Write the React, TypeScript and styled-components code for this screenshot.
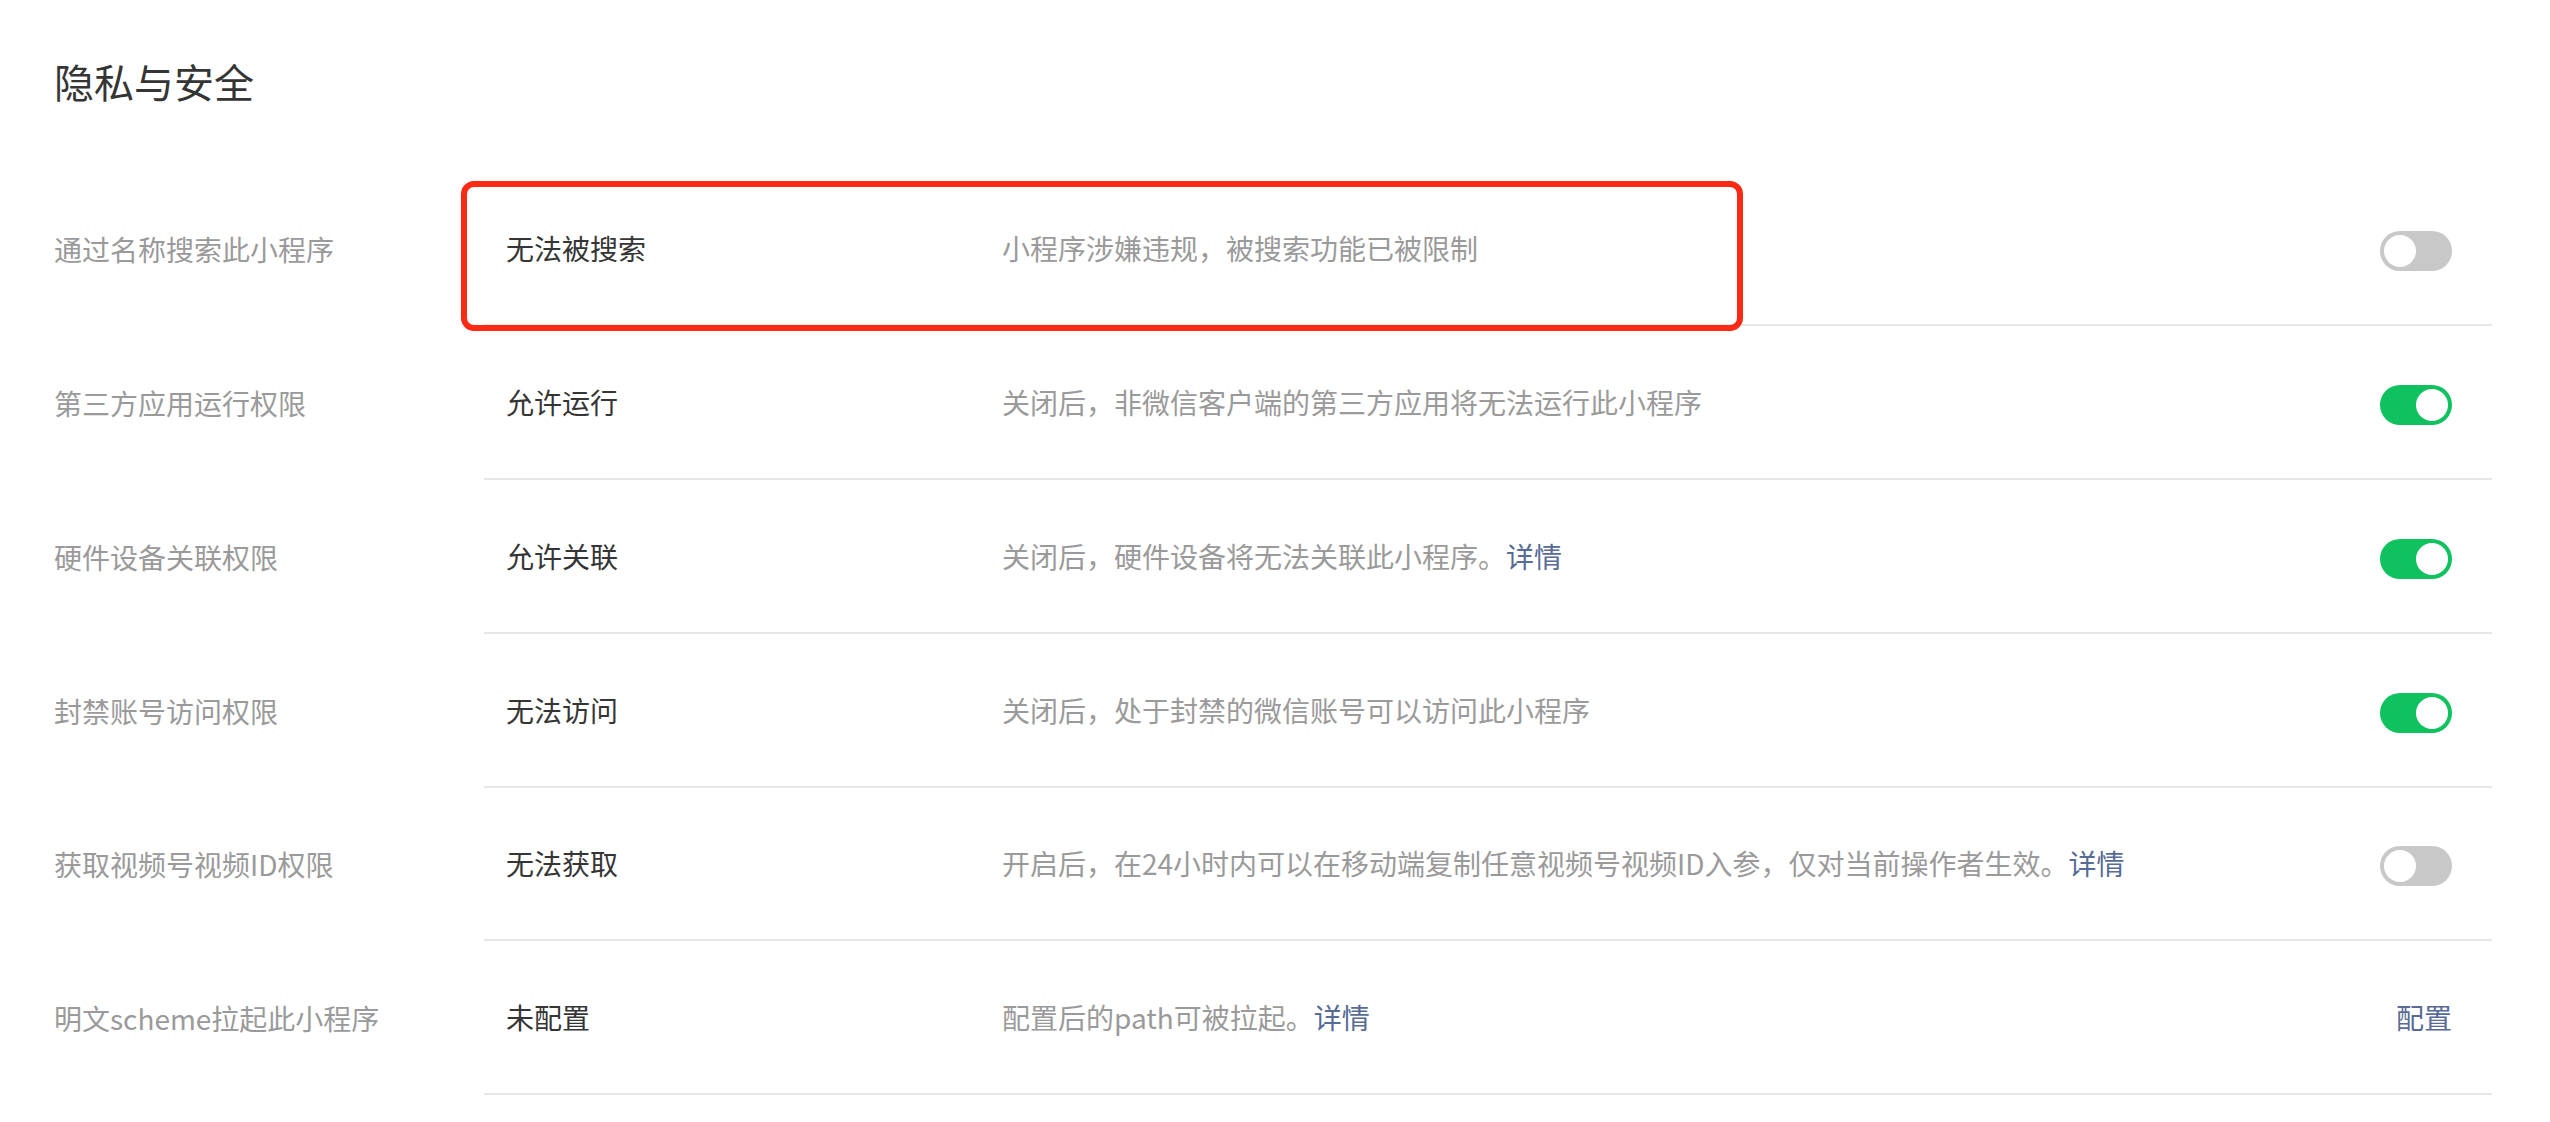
import React from "react";
import styled, { createGlobalStyle } from "styled-components";

const Global = createGlobalStyle`
  html, body { margin: 0; padding: 0; background: #ffffff; }
  body {
    font-family: "Noto Sans CJK SC", "Noto Sans", "Liberation Sans", sans-serif;
    -webkit-font-smoothing: antialiased;
  }
`;

const Page = styled.div`
  width: 2550px;
  height: 1122px;
  box-sizing: border-box;
  padding: 61px 58px 0 54px;
  overflow: hidden;
`;

const Title = styled.h2`
  margin: 0 0 71.5px;
  font-size: 40px;
  line-height: 40px;
  font-weight: 400;
  color: #353535;
`;

const List = styled.div`
  display: flex;
  flex-direction: column;
`;

const Row = styled.div`
  display: flex;
  height: 153.75px;
`;

const Label = styled.div`
  width: 430px;
  flex: none;
  display: flex;
  align-items: center;
  font-size: 28px;
  color: #9a9a9a;
`;

const Body = styled.div`
  position: relative;
  flex: 1;
  display: flex;
  align-items: center;
  box-sizing: border-box;
  padding: 0 40px 0 22px;
  border-bottom: 2px solid #e7e7eb;
`;

const Value = styled.div`
  width: 496px;
  flex: none;
  font-size: 28px;
  color: #353535;
`;

const Desc = styled.div`
  flex: 1;
  font-size: 28px;
  color: #9a9a9a;
`;

const Link = styled.a`
  color: #576b95;
  text-decoration: none;
  cursor: pointer;
`;

const ActionLink = styled(Link)`
  font-size: 28px;
`;

const Switch = styled.div<{ $on: boolean }>`
  position: relative;
  width: 72px;
  height: 40px;
  margin-top: 6px;
  border-radius: 20px;
  flex: none;
  background: ${(p) => (p.$on ? "#0fc15f" : "#c8c8c8")};

  &::after {
    content: "";
    position: absolute;
    top: 4px;
    left: ${(p) => (p.$on ? "36px" : "4px")};
    width: 32px;
    height: 32px;
    border-radius: 50%;
    background: #ffffff;
  }
`;

const Highlight = styled.div`
  position: absolute;
  left: -23px;
  top: 8.5px;
  width: 1282px;
  height: 150px;
  box-sizing: border-box;
  border: 6px solid #fa2a15;
  border-radius: 13px;
  pointer-events: none;
`;

type Item = {
  label: string;
  value: string;
  desc: string;
  detail?: boolean;
  toggle?: boolean;
  action?: string;
  highlight?: boolean;
};

const items: Item[] = [
  { label: "通过名称搜索此小程序", value: "无法被搜索", desc: "小程序涉嫌违规，被搜索功能已被限制", toggle: false, highlight: true },
  { label: "第三方应用运行权限", value: "允许运行", desc: "关闭后，非微信客户端的第三方应用将无法运行此小程序", toggle: true },
  { label: "硬件设备关联权限", value: "允许关联", desc: "关闭后，硬件设备将无法关联此小程序。", detail: true, toggle: true },
  { label: "封禁账号访问权限", value: "无法访问", desc: "关闭后，处于封禁的微信账号可以访问此小程序", toggle: true },
  { label: "获取视频号视频ID权限", value: "无法获取", desc: "开启后，在24小时内可以在移动端复制任意视频号视频ID入参，仅对当前操作者生效。", detail: true, toggle: false },
  { label: "明文scheme拉起此小程序", value: "未配置", desc: "配置后的path可被拉起。", detail: true, action: "配置" },
];

export default function App() {
  return (
    <>
      <Global />
      <Page>
        <Title>隐私与安全</Title>
        <List>
          {items.map((it) => (
            <Row key={it.label}>
              <Label>{it.label}</Label>
              <Body>
                {it.highlight && <Highlight />}
                <Value>{it.value}</Value>
                <Desc>
                  {it.desc}
                  {it.detail && <Link>详情</Link>}
                </Desc>
                {it.action ? (
                  <ActionLink>{it.action}</ActionLink>
                ) : (
                  <Switch $on={!!it.toggle} />
                )}
              </Body>
            </Row>
          ))}
        </List>
      </Page>
    </>
  );
}
